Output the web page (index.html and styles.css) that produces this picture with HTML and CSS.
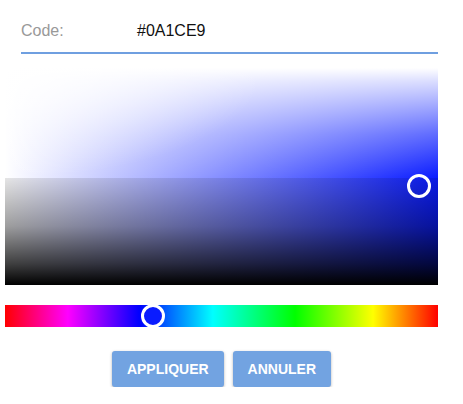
FILE: index.html
```html
<!DOCTYPE html>
<html lang="fr">
<head>
<meta charset="utf-8">
<title>Sélecteur de couleur</title>
<link rel="stylesheet" href="styles.css">
</head>
<body>
<div class="picker">
  <div class="code-row">
    <span class="code-label">Code:</span>
    <span class="code-value">#0A1CE9</span>
  </div>
  <div class="sv">
    <div class="sv-top"></div>
    <div class="sv-bottom"></div>
    <span class="sv-thumb"></span>
  </div>
  <div class="hue">
    <span class="hue-thumb"></span>
  </div>
  <div class="actions">
    <button class="btn">APPLIQUER</button>
    <button class="btn">ANNULER</button>
  </div>
</div>
</body>
</html>
```
FILE: styles.css
```css
* { box-sizing: border-box; }
html, body { margin: 0; padding: 0; background: #fff; }
body { font-family: "Liberation Sans", Arial, sans-serif; }

.picker {
  width: 463px;
  padding: 21px 25px 0 5px;
  display: flex;
  flex-direction: column;
}

.code-row {
  margin-left: 16px;
  display: flex;
  align-items: center;
  font-size: 16px;
  line-height: 20px;
  padding-bottom: 11px;
  border-bottom: 2px solid #6f9fe0;
}
.code-label { width: 116px; color: #999; }
.code-value { color: #111; }

.sv {
  position: relative;
  margin-top: 14px;
  height: 217px;
  display: flex;
  flex-direction: column;
}
.sv-top {
  height: 110px;
  background:
    radial-gradient(ellipse 60% 100% at 0% 0%, rgba(255,255,255,0.8), rgba(255,255,255,0) 100%),
    linear-gradient(to bottom, #fff 0%, rgba(255,255,255,0.85) 12%, rgba(255,255,255,0.35) 60%, rgba(255,255,255,0) 100%),
    linear-gradient(to right, #fff, #0a1cff);
}
.sv-bottom {
  flex: 1;
  background:
    linear-gradient(to bottom, rgba(0,0,0,0.1) 0%, rgba(0,0,0,0.38) 45%, rgba(0,0,0,0.75) 80%, #000 100%),
    linear-gradient(to right, #fff, #0a1cff);
}
.sv-thumb {
  position: absolute;
  left: 402px;
  top: 106px;
  width: 24px;
  height: 24px;
  border: 3px solid #fff;
  border-radius: 50%;
}

.hue {
  position: relative;
  margin-top: 20px;
  height: 22px;
  background: linear-gradient(to right,
    #ff0000 0%, #ff00ff 14.5%, #0000ff 31%, #00ffff 48%,
    #00ff00 67%, #ffff00 85%, #ff0000 100%);
}
.hue-thumb {
  position: absolute;
  left: 136px;
  top: -1px;
  width: 24px;
  height: 24px;
  border: 3px solid #fff;
  border-radius: 50%;
  background: #0a1cff;
}

.actions {
  margin-top: 24px;
  display: flex;
  justify-content: center;
  gap: 9px;
}
.btn {
  height: 36px;
  padding: 0 15px;
  border: none;
  border-radius: 3px;
  background: #72a3e1;
  color: #fff;
  font-family: "Liberation Sans", Arial, sans-serif;
  font-weight: bold;
  font-size: 14px;
  box-shadow: 0 1px 3px rgba(0,0,0,0.3);
}
```
